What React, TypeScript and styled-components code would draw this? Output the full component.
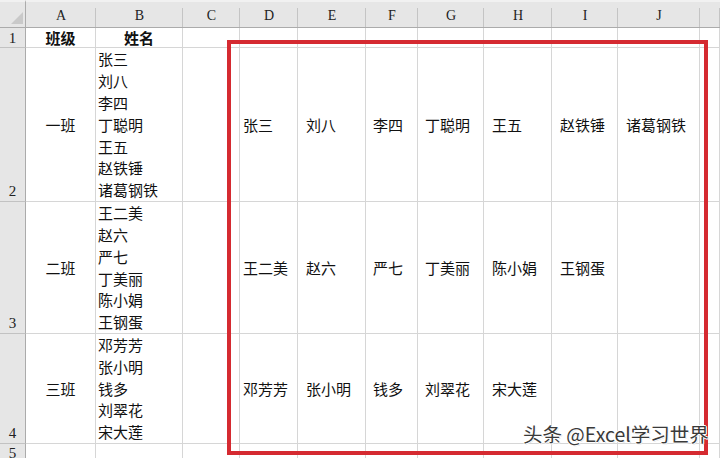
import React from "react";
import styled, { createGlobalStyle } from "styled-components";

const Global = createGlobalStyle`
  html, body { margin: 0; padding: 0; background: #fff; overflow: hidden; }
  #root { width: 720px; height: 458px; }
`;

const Sheet = styled.div`
  position: relative;
  width: 720px;
  height: 458px;
  overflow: hidden;
  display: grid;
  grid-template-columns: 26px 70px 87px 57px 58px 68px 52px 66px 68px 66px 82px 1fr;
  grid-template-rows: 28px 20px 154px 132px 110px 20px;
  font-family: "Noto Sans CJK SC", "Microsoft YaHei", sans-serif;
  font-size: 15px;
  color: #111;
  background: #fff;
`;

const Corner = styled.div`
  background: #e6e6e6;
  border-top: 2px solid #f1f1f1;
  border-right: 1px solid #ababab;
  border-bottom: 1px solid #ababab;
  box-sizing: border-box;
  display: flex;
  align-items: flex-end;
  justify-content: flex-end;
  padding: 0 2px 3px 0;
`;

const ColHead = styled.div`
  position: relative;
  background: #e6e6e6;
  border-top: 2px solid #f1f1f1;
  border-bottom: 1px solid #ababab;
  box-sizing: border-box;
  display: flex;
  align-items: flex-end;
  justify-content: center;
  padding-bottom: 3px;
  font-family: "Liberation Serif", "DejaVu Serif", serif;
  font-size: 14px;
  line-height: 16px;
  color: #222;
  &::after {
    content: "";
    position: absolute;
    right: 0;
    top: 6px;
    bottom: 0;
    width: 1px;
    background: #c4c4c4;
  }
`;

const RowHead = styled.div<{ $bottom?: boolean }>`
  background: #e6e6e6;
  border-right: 1px solid #ababab;
  border-bottom: 1px solid #c2c2c2;
  box-sizing: border-box;
  display: flex;
  align-items: ${(p) => (p.$bottom ? "flex-end" : "center")};
  justify-content: center;
  padding-bottom: ${(p) => (p.$bottom ? "1px" : "0")};
  font-family: "Liberation Serif", "DejaVu Serif", serif;
  font-size: 15px;
  line-height: 18px;
  color: #222;
`;

const Cell = styled.div<{ $h?: "left" | "center"; $v?: "center" | "end"; $pl?: number; $bold?: boolean }>`
  border-right: 1px solid #d6d6d6;
  border-bottom: 1px solid #d6d6d6;
  box-sizing: border-box;
  overflow: hidden;
  display: flex;
  flex-direction: column;
  justify-content: ${(p) => (p.$v === "end" ? "flex-end" : "center")};
  align-items: ${(p) => (p.$h === "center" ? "center" : "flex-start")};
  padding-left: ${(p) => p.$pl ?? 0}px;
  font-weight: ${(p) => (p.$bold ? 700 : 400)};
  line-height: 20px;
  white-space: nowrap;
`;

const NameLine = styled.div`
  line-height: 21.8px;
`;

const Frame = styled.div`
  position: absolute;
  left: 227px;
  top: 40px;
  width: 481px;
  height: 415px;
  border: 4px solid #d52a31;
  box-sizing: border-box;
  pointer-events: none;
`;

const Watermark = styled.div`
  position: absolute;
  left: 523px;
  top: 423px;
  font-family: "Noto Sans CJK SC", sans-serif;
  font-size: 19.5px;
  line-height: 22px;
  color: #3a3a3a;
  white-space: nowrap;
  text-shadow: 1px 0 #fff, -1px 0 #fff, 0 1px #fff, 0 -1px #fff, 1px 1px #ddd;
`;

const groups: [string, string[]][] = [
  ["一班", ["张三", "刘八", "李四", "丁聪明", "王五", "赵铁锤", "诸葛钢铁"]],
  ["二班", ["王二美", "赵六", "严七", "丁美丽", "陈小娟", "王钢蛋"]],
  ["三班", ["邓芳芳", "张小明", "钱多", "刘翠花", "宋大莲"]],
];

const letters = ["A", "B", "C", "D", "E", "F", "G", "H", "I", "J", ""];
const spread = [3, 8, 7, 7, 8, 8, 8];

export default function App() {
  return (
    <>
      <Global />
      <Sheet>
        <Corner>
          <svg width="12" height="12" viewBox="0 0 12 12">
            <polygon points="12,0 12,12 0,12" fill="#c9c9c9" />
          </svg>
        </Corner>
        {letters.map((l, i) => (
          <ColHead key={i}>{l}</ColHead>
        ))}

        <RowHead>1</RowHead>
        <Cell $h="center" $bold>班级</Cell>
        <Cell $h="center" $bold>姓名</Cell>
        {Array.from({ length: 9 }).map((_, i) => (
          <Cell key={i} />
        ))}

        {groups.map(([cls, names], r) => (
          <React.Fragment key={cls}>
            <RowHead $bottom>{r + 2}</RowHead>
            <Cell $h="center">{cls}</Cell>
            <Cell $v="end" $pl={2}>
              {names.map((n) => (
                <NameLine key={n}>{n}</NameLine>
              ))}
            </Cell>
            <Cell />
            {spread.map((pl, i) => (
              <Cell key={i} $pl={pl}>{names[i] ?? ""}</Cell>
            ))}
            <Cell />
          </React.Fragment>
        ))}

        <RowHead $bottom>5</RowHead>
        {Array.from({ length: 11 }).map((_, i) => (
          <Cell key={i} />
        ))}

        <Frame />
        <Watermark>头条 @Excel学习世界</Watermark>
      </Sheet>
    </>
  );
}
